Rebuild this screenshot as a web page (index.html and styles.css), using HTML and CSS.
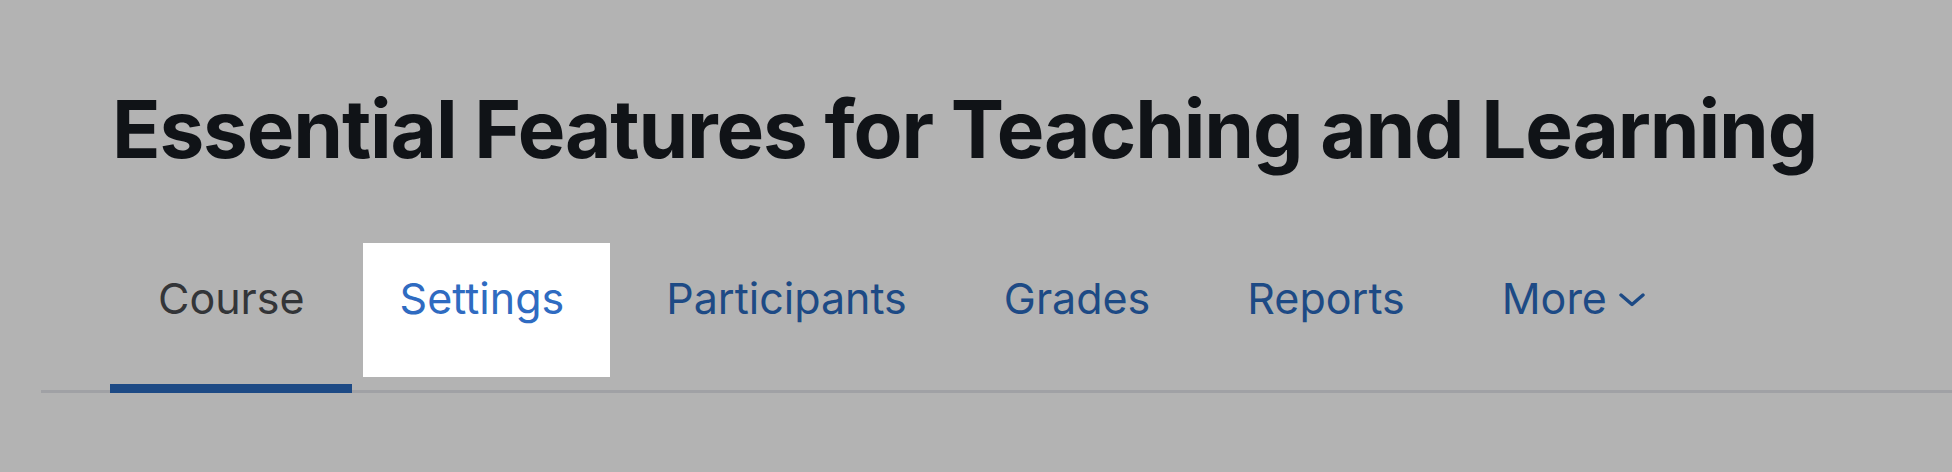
FILE: index.html
```html
<!DOCTYPE html>
<html lang="en">
<head>
    <meta charset="UTF-8">
    <meta name="viewport" content="width=device-width, initial-scale=1.0">
    <title>Essential Features for Teaching and Learning</title>
    <link rel="stylesheet" href="styles.css">
</head>
<body>
    <div class="page">
        <h1 class="course-title">Essential Features for Teaching and Learning</h1>

        <ul class="secondary-nav">
            <li class="tab active"><a href="#">Course</a></li>
            <li class="tab highlight"><a href="#">Settings</a></li>
            <li class="tab"><a href="#">Participants</a></li>
            <li class="tab"><a href="#">Grades</a></li>
            <li class="tab"><a href="#">Reports</a></li>
            <li class="tab">
                <a href="#" class="more-link">More
                    <svg class="chevron" width="26" height="14" viewBox="0 0 26 14">
                        <path d="M2 2 L13 11.5 L24 2" fill="none" stroke="currentColor" stroke-width="3.4" stroke-linecap="round" stroke-linejoin="round"/>
                    </svg>
                </a>
            </li>
        </ul>
    </div>
</body>
</html>
```

FILE: styles.css
```css
body {
    margin: 0;
    background: #b3b3b3;
    font-family: Inter, "Noto Sans", sans-serif;
}

.page {
    padding-left: 41px;
    padding-top: 81px;
    height: 472px;
    box-sizing: border-box;
}

.course-title {
    margin: 0 0 66px 71px;
    font-size: 80px;
    line-height: 96px;
    font-weight: 700;
    letter-spacing: -1.15px;
    color: #101317;
}

.secondary-nav {
    list-style: none;
    margin: 0;
    padding: 0 0 0 69px;
    display: flex;
    border-bottom: 3px solid #a0a1a5;
}

.tab {
    margin-bottom: -3px;
    border-bottom: 9px solid transparent;
}

.tab a {
    display: flex;
    align-items: center;
    padding: 29px 48.5px 60px;
    font-size: 43px;
    line-height: 52px;
    color: #1d4a85;
    text-decoration: none;
}

.tab.active {
    border-bottom-color: #1d4a85;
}

.tab.active a {
    color: #333538;
    padding-left: 48px;
    padding-right: 47px;
}

.tab.highlight a {
    background: #fff;
    color: #2f6bc1;
    margin: 0 8px 7px 11px;
    padding: 29px 45.5px 53px 37px;
}

.chevron {
    margin-left: 12px;
    margin-top: 4px;
}
```
